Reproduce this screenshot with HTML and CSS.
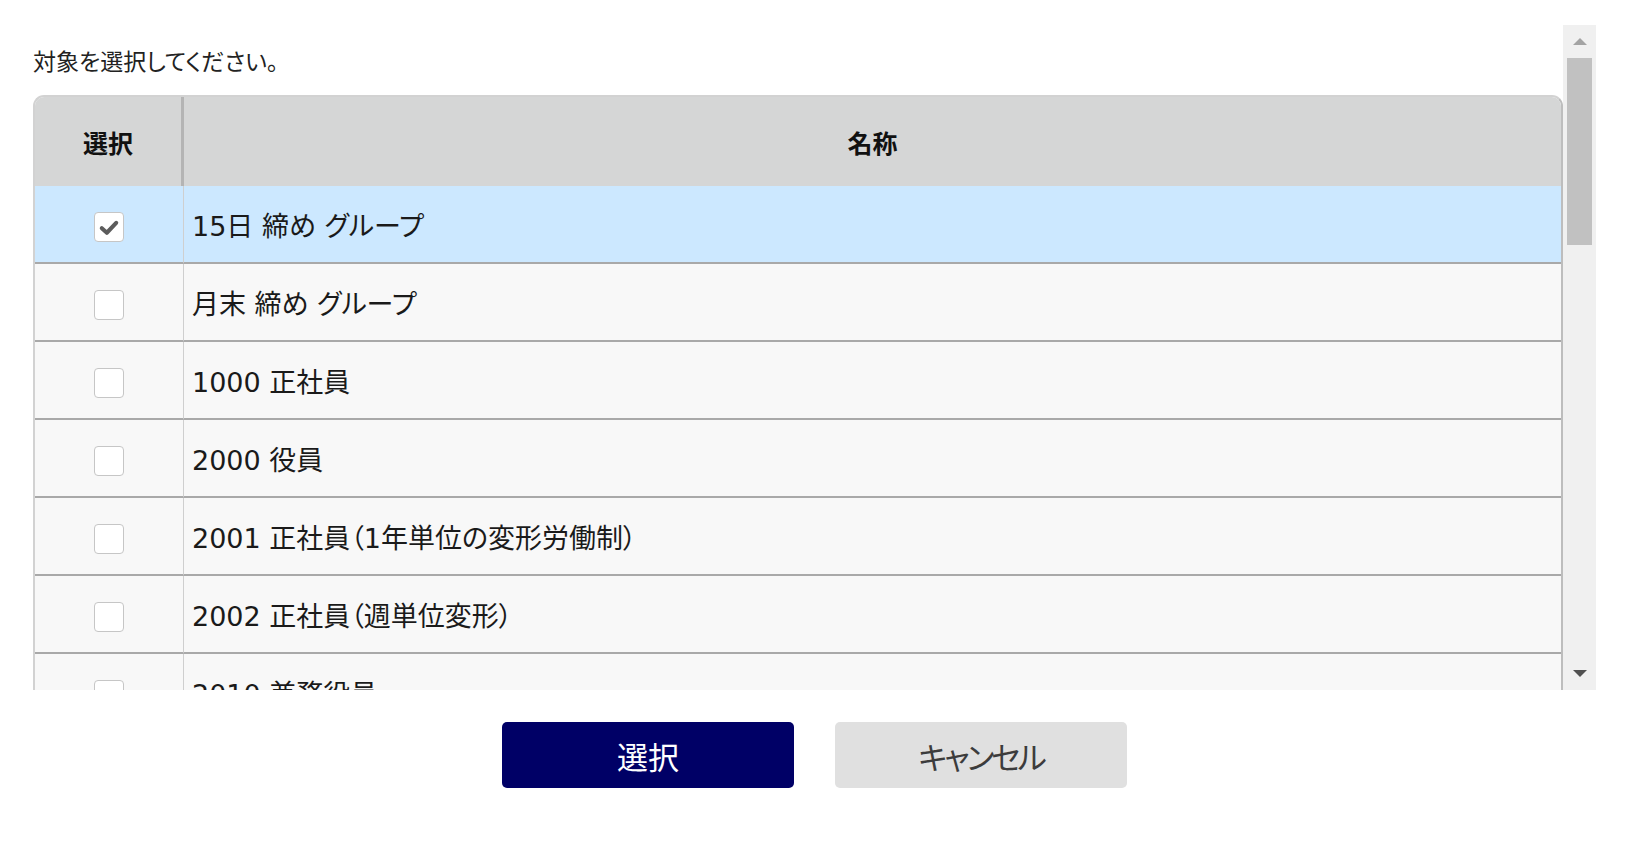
FILE: index.html
```html
<!DOCTYPE html>
<html lang="ja">
<head>
    <meta charset="UTF-8">
    <meta name="viewport" content="width=device-width, initial-scale=1.0">
    <title>対象選択</title>
    <link rel="stylesheet" href="styles.css">
</head>
<body>
    <div class="panel">
        <div class="list">
            <p class="lead">対象を選択してください。</p>

            <div class="grid-wrap">
                <table class="grid">
                    <thead>
                        <tr>
                            <th class="col-check">選択</th>
                            <th class="col-name">名称</th>
                        </tr>
                    </thead>
                    <tbody>
                        <tr class="selected">
                            <td class="col-check"><span class="checkbox checked">
                                <svg viewBox="0 0 20 20" width="24" height="24"><path d="M4 11 L8.2 14.8 L16 6.5" fill="none" stroke="#5c5c5c" stroke-width="3.4" stroke-linecap="round" stroke-linejoin="round"/></svg>
                            </span></td>
                            <td class="col-name">15日 締め グループ</td>
                        </tr>
                        <tr>
                            <td class="col-check"><span class="checkbox"></span></td>
                            <td class="col-name">月末 締め グループ</td>
                        </tr>
                        <tr>
                            <td class="col-check"><span class="checkbox"></span></td>
                            <td class="col-name">1000 正社員</td>
                        </tr>
                        <tr>
                            <td class="col-check"><span class="checkbox"></span></td>
                            <td class="col-name">2000 役員</td>
                        </tr>
                        <tr>
                            <td class="col-check"><span class="checkbox"></span></td>
                            <td class="col-name">2001 正社員（1年単位の変形労働制）</td>
                        </tr>
                        <tr>
                            <td class="col-check"><span class="checkbox"></span></td>
                            <td class="col-name">2002 正社員（週単位変形）</td>
                        </tr>
                        <tr>
                            <td class="col-check"><span class="checkbox"></span></td>
                            <td class="col-name">2010 兼務役員</td>
                        </tr>
                        <tr>
                            <td class="col-check"><span class="checkbox"></span></td>
                            <td class="col-name">3000 パート</td>
                        </tr>
                    </tbody>
                </table>
            </div>
        </div>

        <!-- scrollbar -->
        <div class="scrollbar">
            <div class="sb-btn sb-up"><span class="arrow-up"></span></div>
            <div class="sb-track"><div class="sb-thumb"></div></div>
            <div class="sb-btn sb-down"><span class="arrow-down"></span></div>
        </div>
    </div>

    <div class="actions">
        <button class="btn btn-primary">選択</button>
        <button class="btn btn-cancel">キャンセル</button>
    </div>
</body>
</html>
```

FILE: styles.css
```css
body {
    margin: 0;
    padding: 0;
    background-color: #fff;
    color: #222;
    font-family: "DejaVu Sans", "Noto Sans CJK JP", sans-serif;
    font-feature-settings: "palt";
}
.panel {
    display: flex;
    height: 665px;
    margin: 25px 36px 0 33px;
}
.list {
    flex: 1;
    overflow: hidden;
}
.lead {
    margin: 0;
    padding-top: 21px;
    font-family: "Noto Sans CJK JP", sans-serif;
    font-size: 23px;
    line-height: 28px;
    color: #222;
}
.grid-wrap {
    margin-top: 21px;
    border: 2px solid #d2d2d2;
    border-bottom: none;
    border-right-color: #bdbdbd;
    border-radius: 11px 11px 0 0;
    overflow: hidden;
}
.grid {
    width: 100%;
    border-collapse: separate;
    border-spacing: 0;
}
.grid th {
    height: 89px;
    padding: 0;
    background-color: #d5d6d6;
    font-family: "Noto Sans CJK JP", sans-serif;
    font-size: 25px;
    font-weight: bold;
    color: #111;
    text-align: center;
}
.grid th.col-check {
    border-right: 3px solid #b4b4b4;
}
.grid td {
    height: 76px;
    padding: 0;
    background-color: #f8f8f8;
    border-bottom: 2px solid #a9a9a9;
    font-size: 27px;
    color: #1a1a1a;
}
.grid tr.selected td {
    background-color: #cce8ff;
}
.grid td.col-check {
    text-align: center;
    border-right: 1px solid #cfcfcf;
}
.col-check {
    width: 146px;
}
.grid td.col-name {
    padding-left: 8px;
}
.checkbox {
    display: inline-flex;
    align-items: center;
    justify-content: center;
    width: 28px;
    height: 28px;
    margin-top: 5px;
    vertical-align: middle;
    background-color: #fff;
    border: 1px solid #c6c6c6;
    border-radius: 4px;
}
.scrollbar {
    width: 33px;
    display: flex;
    flex-direction: column;
    background-color: #f0f0f0;
}
.sb-btn {
    height: 33px;
    display: flex;
    align-items: center;
    justify-content: center;
}
.arrow-up {
    width: 0;
    height: 0;
    border-left: 7px solid transparent;
    border-right: 7px solid transparent;
    border-bottom: 7px solid #a3a3a3;
}
.arrow-down {
    width: 0;
    height: 0;
    border-left: 7px solid transparent;
    border-right: 7px solid transparent;
    border-top: 7px solid #505050;
}
.sb-track {
    flex: 1;
    padding: 0 4px;
}
.sb-thumb {
    height: 187px;
    background-color: #c1c1c1;
}
.actions {
    display: flex;
    justify-content: center;
    gap: 41px;
    margin-top: 32px;
    padding-right: 3px;
}
.btn {
    width: 292px;
    height: 66px;
    border: none;
    border-radius: 5px;
    font-family: "Noto Sans CJK JP", sans-serif;
    font-feature-settings: "palt";
    font-size: 31px;
    cursor: pointer;
}
.btn-primary {
    background-color: #000066;
    color: #fff;
}
.btn-cancel {
    background-color: #e0e0e0;
    color: #3c3c3c;
    letter-spacing: -3px;
}
```
